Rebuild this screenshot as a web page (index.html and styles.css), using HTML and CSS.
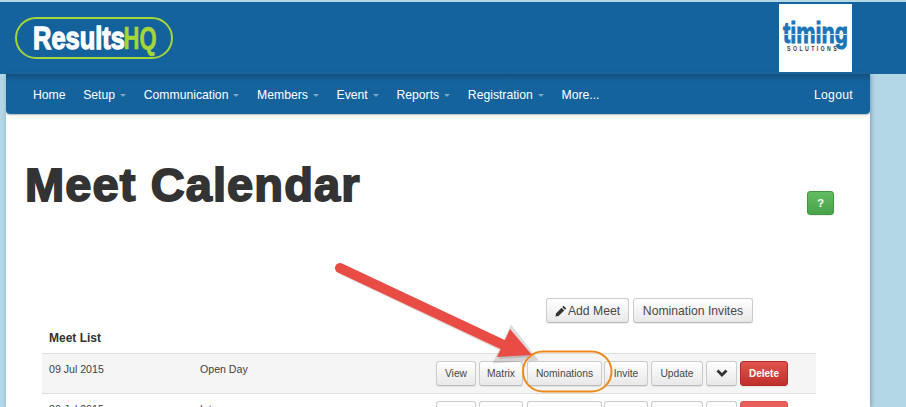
FILE: index.html
```html
<!DOCTYPE html>
<html lang="en">
<head>
<meta charset="utf-8">
<title>Meet Calendar</title>
<link rel="stylesheet" href="styles.css">
</head>
<body>
<header class="header">
  <svg class="logo" width="158" height="42" viewBox="0 0 158 42">
    <rect x="1" y="1" width="156" height="40" rx="20" fill="#14629c" stroke="#a4d639" stroke-width="2"/>
    <text class="logo-text" x="18" y="32" textLength="92" lengthAdjust="spacingAndGlyphs">Results</text>
    <text class="logo-text logo-hq" x="108.500" y="32" textLength="33" lengthAdjust="spacingAndGlyphs">HQ</text>
  </svg>
  <svg class="sponsor" width="73" height="68" viewBox="0 0 73 68">
    <rect width="73" height="68" fill="#fff"/>
    <text class="sponsor-main" x="4" y="39" textLength="65" lengthAdjust="spacingAndGlyphs">timing</text>
    <rect x="4" y="30" width="65" height="1" fill="#d5e6f2"/>
    <text class="sponsor-sub" transform="scale(.7 1)" x="11.500" y="47" textLength="71" lengthAdjust="spacing">SOLUTIONS</text>
  </svg>
</header>
<div class="page">
  <nav class="nav">
    <ul class="nav-list">
      <li class="nav-item">Home</li>
      <li class="nav-item nav-drop">Setup</li>
      <li class="nav-item nav-drop">Communication</li>
      <li class="nav-item nav-drop">Members</li>
      <li class="nav-item nav-drop">Event</li>
      <li class="nav-item nav-drop">Reports</li>
      <li class="nav-item nav-drop">Registration</li>
      <li class="nav-item">More...</li>
    </ul>
    <span class="nav-item nav-logout">Logout</span>
  </nav>
  <main class="content">
    <div class="title-row">
      <h1 class="title">Meet Calendar</h1>
      <button class="btn btn-help">?</button>
    </div>
    <div class="actions">
      <button class="btn btn-big"><svg class="pencil" width="12" height="12" viewBox="0 0 12 12"><path d="M8.600.8l2.600 2.600-1.300 1.300-2.600-2.600zM6.600 2.800l2.600 2.600L3.500 11 .5 11.500 1 8.500z" fill="#333"/></svg>Add Meet</button>
      <button class="btn btn-big">Nomination Invites</button>
    </div>
    <h2 class="list-title">Meet List</h2>
    <div class="row row-alt">
      <span class="cell-date">09 Jul 2015</span>
      <span class="cell-name">Open Day</span>
      <div class="row-btns">
        <button class="btn btn-view">View</button>
        <button class="btn btn-matrix">Matrix</button>
        <button class="btn btn-nom">Nominations</button>
        <button class="btn btn-invite">Invite</button>
        <button class="btn btn-update">Update</button>
        <button class="btn btn-more"><svg width="12" height="8" viewBox="0 0 12 8"><path d="M1.500 1.500L6 6l4.500-4.500" fill="none" stroke="#333" stroke-width="2.800"/></svg></button>
        <button class="btn btn-del">Delete</button>
      </div>
    </div>
    <div class="row">
      <span class="cell-date">30 Jul 2015</span>
      <span class="cell-name">Intra</span>
      <div class="row-btns">
        <button class="btn btn-view">View</button>
        <button class="btn btn-matrix">Matrix</button>
        <button class="btn btn-nom">Nominations</button>
        <button class="btn btn-invite">Invite</button>
        <button class="btn btn-update">Update</button>
        <button class="btn btn-more"><svg width="12" height="8" viewBox="0 0 12 8"><path d="M1.500 1.500L6 6l4.500-4.500" fill="none" stroke="#333" stroke-width="2.800"/></svg></button>
        <button class="btn btn-del btn-del-soft">Delete</button>
      </div>
    </div>
  </main>
</div>
<svg class="annotation" width="906" height="407" viewBox="0 0 906 407">
  <path class="arrow-shadow" d="M342 271L508 350M512 332L499 359L531 357Z"/>
  <path class="arrow-line" d="M340 268L510 348"/>
  <path class="arrow-head" d="M510 329L497 357L532 355Z"/>
  <rect class="highlight" x="523" y="351.500" width="88.500" height="40" rx="20"/>
</svg>
</body>
</html>
```
FILE: styles.css
```css
html, body {
  margin: 0;
  height: 407px;
  overflow: hidden;
}
body {
  position: relative;
  background: #b4d7e7;
  font-family: "Liberation Sans", Arial, sans-serif;
  color: #333;
  padding-top: 2px;
  box-sizing: border-box;
}
.header {
  height: 72px;
  background: #14639d;
  display: flex;
  justify-content: space-between;
  align-items: flex-start;
  padding: 2px 54px 0 15px;
  box-sizing: border-box;
}
.logo {
  margin-top: 13px;
}
.logo-text {
  font-family: "Liberation Sans", sans-serif;
  font-weight: 700;
  font-size: 31px;
  fill: #fff;
  stroke: #fff;
  stroke-width: 1.300px;
}
.logo-hq {
  fill: #a4d639;
  stroke: #a4d639;
  stroke-width: .6px;
}
.sponsor-main {
  font-family: "Liberation Sans", sans-serif;
  font-weight: 700;
  font-size: 29px;
  fill: #1a74b8;
  stroke: #1a74b8;
  stroke-width: 1px;
}
.sponsor-sub {
  font-family: "Liberation Sans", sans-serif;
  font-weight: 700;
  font-size: 7.500px;
  fill: #3a3a3a;
}
.page {
  width: 864px;
  margin-left: 6px;
  height: 333px;
  background: #fff;
  box-shadow: 1px 0 4px rgba(60, 100, 125, .55);
  overflow: hidden;
}
.nav {
  height: 40px;
  background: linear-gradient(#14527f 0, #14639d 8px);
  border-radius: 0 0 4px 4px;
  box-shadow: 0 1px 2px rgba(0, 0, 0, .3);
  display: flex;
  justify-content: space-between;
  align-items: center;
  padding: 2px 17px 0 27px;
  box-sizing: border-box;
}
.nav-list {
  display: flex;
  list-style: none;
  margin: 0;
  padding: 0;
  gap: 17.700px;
}
.nav-item {
  font-size: 12.200px;
  color: #fff;
}
.nav-logout {
  letter-spacing: .3px;
}
.nav-drop::after {
  content: "";
  display: inline-block;
  margin-left: 5px;
  vertical-align: middle;
  border: 3px solid transparent;
  border-top-color: #7fa6c4;
  border-bottom: 0;
}
.content {
  padding: 0 0 0 19px;
}
.title-row {
  display: flex;
  justify-content: space-between;
  align-items: flex-start;
  padding-right: 36px;
  height: 184px;
}
.title {
  margin: 43px 0 0;
  font-size: 47px;
  line-height: 56px;
  font-weight: 700;
  color: #333;
  -webkit-text-stroke: 1.800px #333;
  letter-spacing: 1.100px;
}
.btn {
  font-family: "Liberation Sans", sans-serif;
  font-size: 10.300px;
  color: #484848;
  background: linear-gradient(#fff, #e8e8e8);
  border: 1px solid #ccc;
  border-bottom-color: #bbb;
  border-radius: 3px;
  padding: 0;
  height: 25px;
  box-sizing: border-box;
  box-shadow: 0 1px 1px rgba(0, 0, 0, .08);
}
.btn-help {
  width: 27px;
  height: 24px;
  margin-top: 77px;
  background: linear-gradient(#62bc62, #4aa34a);
  border-color: #419641;
  color: #fff;
  font-weight: 700;
  font-size: 11px;
}
.actions {
  display: flex;
  justify-content: flex-end;
  gap: 4px;
  padding-right: 117px;
}
.btn-big {
  font-size: 12.200px;
  display: inline-flex;
  align-items: center;
  justify-content: center;
}
.actions .btn-big:first-child {
  width: 83px;
}
.actions .btn-big:last-child {
  width: 120px;
}
.pencil {
  margin-right: 1px;
}
.list-title {
  margin: 8px 0 0 24px;
  font-size: 12px;
  line-height: 14px;
  font-weight: 700;
  height: 22px;
}
.row {
  margin: 0 54px 0 17px;
  height: 40px;
  border-top: 1px solid #ddd;
  box-sizing: border-box;
  display: flex;
  font-size: 10.600px;
  line-height: 14px;
  color: #3f3f3f;
}
.row-alt {
  background: #f5f5f5;
}
.cell-date {
  width: 151px;
  margin: 8px 0 0 7px;
}
.cell-name {
  width: 236px;
  margin-top: 8px;
}
.row-btns {
  display: flex;
  gap: 3px;
  margin-top: 7px;
}
.btn-view { width: 40px; }
.btn-matrix { width: 44px; }
.btn-nom { width: 75px; margin-left: 1px; }
.btn-invite { width: 44px; margin-left: -1px; }
.btn-update { width: 52px; }
.btn-more { width: 31px; }
.btn-del {
  width: 48px;
  font-size: 10px;
  background: linear-gradient(#e0534f, #bf302c);
  border-color: #b52b27;
  color: #fff;
  font-weight: 700;
}
.btn-del-soft {
  background: #e8605c;
  border-color: #d9534f;
}
.annotation {
  position: absolute;
  left: 0;
  top: 0;
  pointer-events: none;
}
.arrow-shadow {
  fill: rgba(70, 40, 40, .16);
  stroke: rgba(70, 40, 40, .16);
  stroke-width: 8;
  stroke-linecap: round;
}
.arrow-line {
  fill: none;
  stroke: #e94b45;
  stroke-width: 10;
  stroke-linecap: round;
}
.arrow-head {
  fill: #e94b45;
}
.highlight {
  fill: none;
  stroke: #ee8a1c;
  stroke-width: 2;
}
```
